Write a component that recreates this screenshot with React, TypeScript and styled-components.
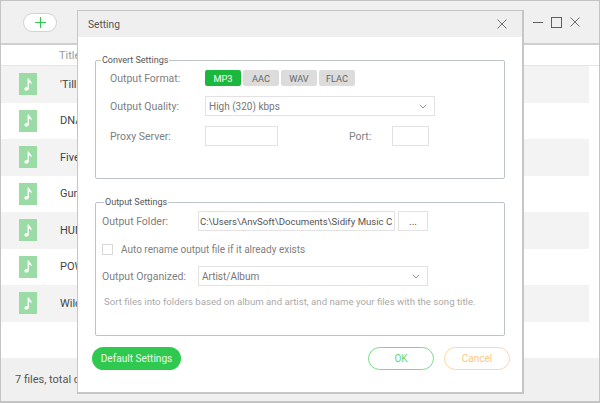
import React from "react";
import styled, { createGlobalStyle } from "styled-components";

const GlobalStyle = createGlobalStyle`
	html, body {
		margin: 0;
		padding: 0;
		background: #fff;
	}
	* {
		box-sizing: border-box;
	}
`;

const AppWindow = styled.div`
	position: relative;
	width: 600px;
	height: 403px;
	display: flex;
	flex-direction: column;
	border: 1px solid #c4c4c4;
	border-bottom-width: 2px;
	background: #fff;
	overflow: hidden;
	font-family: Roboto, "Open Sans", sans-serif;
	font-size: 10.5px;
	color: #555;
`;

const Toolbar = styled.div`
	height: 44px;
	flex: none;
	display: flex;
	align-items: center;
	justify-content: space-between;
	padding: 0 19px 0 22px;
	background: #f0f0f0;
	border-bottom: 2px solid #cfcfcf;
`;

const AddButton = styled.div`
	width: 34px;
	height: 19px;
	display: flex;
	align-items: center;
	justify-content: center;
	background: #fff;
	border: 1px solid #d2d2d2;
	border-radius: 10px;
`;

const WindowControls = styled.div`
	display: flex;
	align-items: center;
	gap: 8px;
`;

const TableHead = styled.div`
	height: 21px;
	flex: none;
	display: flex;
	align-items: center;
	padding-left: 58px;
	border-bottom: 1px solid #e4e4e4;
	color: #9a9a9a;
	font-size: 11px;
`;

const TrackList = styled.div`
	flex: 1;
	padding-right: 10px;
`;

const TrackRow = styled.div<{ $shaded: boolean }>`
	height: 36.5px;
	display: flex;
	align-items: center;
	gap: 23px;
	padding-left: 18px;
	background: ${({ $shaded }) => ($shaded ? "#f3f3f3" : "#fff")};
	font-size: 11px;
	color: #444;
`;

const TrackThumb = styled.div`
	width: 18px;
	height: 22px;
	display: flex;
	align-items: center;
	justify-content: center;
	background: #9bdca6;
`;

const StatusBar = styled.div`
	height: 43px;
	flex: none;
	display: flex;
	align-items: center;
	padding-left: 14px;
	background: #f0f0f0;
	font-size: 11px;
	color: #555;
`;

const Dialog = styled.div`
	position: absolute;
	left: 76px;
	top: 9px;
	width: 447px;
	height: 384px;
	display: flex;
	flex-direction: column;
	background: #fff;
	border: 1px solid #c6c6c6;
	border-right-width: 2px;
	border-bottom-width: 2px;
`;

const DialogTitle = styled.div`
	height: 26px;
	flex: none;
	display: flex;
	align-items: center;
	justify-content: space-between;
	padding: 0 15px 0 10px;
	background: #efefef;
	font-size: 10.2px;
	color: #555;
`;

const DialogBody = styled.div`
	flex: 1;
	display: flex;
	flex-direction: column;
	padding: 17px 18px 0 17px;
`;

const Group = styled.fieldset<{ $height: number; $inset: number; $legendLeft: number; $gap?: number }>`
	position: relative;
	margin: ${({ $gap }) => $gap ?? 0}px 0 0 0;
	width: 410px;
	height: ${({ $height }) => $height}px;
	padding: 0 0 0 ${({ $inset }) => $inset}px;
	border: 1px solid #bcc4c8;
	border-radius: 2px;

	legend {
		margin-left: ${({ $inset, $legendLeft }) => $legendLeft - $inset}px;
		padding: 0 1px;
		font-size: 9px;
		line-height: 12px;
		color: #555;
	}
`;

const FormRow = styled.div<{ $top: number }>`
	display: flex;
	align-items: center;
	margin-top: ${({ $top }) => $top}px;
`;

const FieldLabel = styled.label<{ $width: number }>`
	flex: none;
	width: ${({ $width }) => $width}px;
	font-size: 10.5px;
	color: #808080;
`;

const Chips = styled.div`
	display: flex;
	gap: 2px;
`;

const Chip = styled.div<{ $active?: boolean }>`
	width: 36px;
	height: 16px;
	display: flex;
	align-items: center;
	justify-content: center;
	border-radius: 2px;
	background: ${({ $active }) => ($active ? "#1cb83e" : "#dcdcdc")};
	color: ${({ $active }) => ($active ? "#fff" : "#666")};
	font-size: 9.2px;
`;

const Field = styled.div<{ $width: number }>`
	flex: none;
	width: ${({ $width }) => $width}px;
	height: 20px;
	display: flex;
	align-items: center;
	justify-content: space-between;
	padding: 0 7px 0 3px;
	border: 1px solid #e2e2e2;
	font-size: 10px;
	color: #777;
	white-space: nowrap;
	overflow: hidden;
`;

const PathField = styled(Field)`
	padding: 0 0 0 1px;
	font-size: 9.6px;
	color: #555;
`;

const BrowseButton = styled.div`
	flex: none;
	width: 30px;
	height: 20px;
	margin-left: 3px;
	display: flex;
	align-items: center;
	justify-content: center;
	border: 1px solid #e2e2e2;
	font-size: 10px;
	color: #555;
`;

const PortLabel = styled(FieldLabel)`
	margin-left: 71px;
`;

const Checkbox = styled.div`
	flex: none;
	width: 11px;
	height: 11px;
	margin-right: 8px;
	border: 1px solid #d8d8d8;
`;

const CheckLabel = styled.span`
	font-size: 10px;
	color: #808080;
`;

const Hint = styled.div`
	margin: 10px 0 0 2px;
	font-size: 9.65px;
	color: #aaa;
	white-space: nowrap;
`;

const DialogFooter = styled.div`
	display: flex;
	align-items: center;
	justify-content: space-between;
	margin: 11px -6px 0 -3px;
`;

const ButtonGroup = styled.div`
	display: flex;
	gap: 10px;
`;

const PrimaryButton = styled.div`
	width: 89px;
	height: 23px;
	display: flex;
	align-items: center;
	justify-content: center;
	border-radius: 12px;
	background: #2fc94f;
	color: #e8fbe9;
	font-size: 10.1px;
`;

const OutlineButton = styled.div<{ $color: string; $text: string }>`
	width: 66px;
	height: 23px;
	display: flex;
	align-items: center;
	justify-content: center;
	border: 1px solid ${({ $color }) => $color};
	border-radius: 12px;
	color: ${({ $text }) => $text};
	font-size: 10px;
`;

const Chevron = () => (
	<svg width="8" height="5" viewBox="0 0 8 5" fill="none" stroke="#8a8a8a" strokeWidth="0.9">
		<path d="M0.8 0.8 L4 4 L7.2 0.8" />
	</svg>
);

const CloseIcon = ({ size }: { size: number }) => (
	<svg width={size} height={size} viewBox="0 0 10 10" fill="none" stroke="#5f5f5f" strokeWidth="0.9">
		<path d="M0.5 0.5 L9.5 9.5 M9.5 0.5 L0.5 9.5" />
	</svg>
);

const NoteIcon = () => (
	<svg width="9" height="13" viewBox="0 0 9 13" fill="#fff">
		<path d="M3.6 0.5 L4.9 0.5 C5.1 2.6 8.6 3.6 7.6 6.6 C7.2 5.3 6.1 4.7 4.9 4.4 L4.9 10.2 C4.9 11.6 3.6 12.5 2.3 12.5 C1.1 12.5 0.4 11.8 0.4 10.9 C0.4 9.8 1.6 9 2.7 9 C3 9 3.3 9 3.6 9.2 Z" />
	</svg>
);

const tracks = ["'Till I", "DNA", "Five", "Gun", "HUM", "POW", "Wild"];

export default function App() {
	return (
		<>
			<GlobalStyle />
			<AppWindow>
				<Toolbar>
					<AddButton>
						<svg width="11" height="11" viewBox="0 0 11 11" stroke="#2fc94f" strokeWidth="1.1">
							<path d="M5.5 0 V11 M0 5.5 H11" />
						</svg>
					</AddButton>
					<WindowControls>
						<svg width="10" height="10" viewBox="0 0 10 10" stroke="#5f5f5f" strokeWidth="1">
							<path d="M0 5.5 H10" />
						</svg>
						<svg width="11" height="11" viewBox="0 0 11 11" fill="none" stroke="#5f5f5f" strokeWidth="1">
							<rect x="0.5" y="0.5" width="10" height="10" />
						</svg>
						<CloseIcon size={10} />
					</WindowControls>
				</Toolbar>
				<TableHead>Title</TableHead>
				<TrackList>
					{tracks.map((name, i) => (
						<TrackRow key={name} $shaded={i % 2 === 0}>
							<TrackThumb>
								<NoteIcon />
							</TrackThumb>
							<span>{name}</span>
						</TrackRow>
					))}
				</TrackList>
				<StatusBar>7 files, total duration</StatusBar>

				<Dialog>
					<DialogTitle>
						<span>Setting</span>
						<CloseIcon size={10} />
					</DialogTitle>
					<DialogBody>
						<Group $height={125} $inset={14} $legendLeft={5}>
							<legend>Convert Settings</legend>
							<FormRow $top={4}>
								<FieldLabel $width={95}>Output Format:</FieldLabel>
								<Chips>
									<Chip $active>MP3</Chip>
									<Chip>AAC</Chip>
									<Chip>WAV</Chip>
									<Chip>FLAC</Chip>
								</Chips>
							</FormRow>
							<FormRow $top={10}>
								<FieldLabel $width={95}>Output Quality:</FieldLabel>
								<Field $width={230}>
									High (320) kbps
									<Chevron />
								</Field>
							</FormRow>
							<FormRow $top={10}>
								<FieldLabel $width={95}>Proxy Server:</FieldLabel>
								<Field $width={73} />
								<PortLabel $width={43}>Port:</PortLabel>
								<Field $width={37} />
							</FormRow>
						</Group>
						<Group $height={140} $inset={6} $legendLeft={8} $gap={17}>
							<legend>Output Settings</legend>
							<FormRow $top={3}>
								<FieldLabel $width={96}>Output Folder:</FieldLabel>
								<PathField $width={197}>C:\Users\AnvSoft\Documents\Sidify Music C</PathField>
								<BrowseButton>...</BrowseButton>
							</FormRow>
							<FormRow $top={13}>
								<Checkbox />
								<CheckLabel>Auto rename output file if it already exists</CheckLabel>
							</FormRow>
							<FormRow $top={11}>
								<FieldLabel $width={96}>Output Organized:</FieldLabel>
								<Field $width={230}>
									Artist/Album
									<Chevron />
								</Field>
							</FormRow>
							<Hint>Sort files into folders based on album and artist, and name your files with the song title.</Hint>
						</Group>
						<DialogFooter>
							<PrimaryButton>Default Settings</PrimaryButton>
							<ButtonGroup>
								<OutlineButton $color="#74dd8a" $text="#5fd478">OK</OutlineButton>
								<OutlineButton $color="#fbd9a5" $text="#f9c987">Cancel</OutlineButton>
							</ButtonGroup>
						</DialogFooter>
					</DialogBody>
				</Dialog>
			</AppWindow>
		</>
	);
}
